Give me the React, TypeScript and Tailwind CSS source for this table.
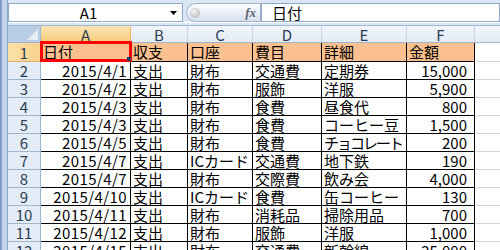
import React from "react";

const cols = [
  { key: "A", w: "w-[90px]" },
  { key: "B", w: "w-[57px]" },
  { key: "C", w: "w-[65px]" },
  { key: "D", w: "w-[69px]" },
  { key: "E", w: "w-[85px]" },
  { key: "F", w: "w-[68px]" },
];

const rows: string[][] = [
  ["2015/4/1", "支出", "財布", "交通費", "定期券", "15,000"],
  ["2015/4/2", "支出", "財布", "服飾", "洋服", "5,900"],
  ["2015/4/3", "支出", "財布", "食費", "昼食代", "800"],
  ["2015/4/3", "支出", "財布", "食費", "コーヒー豆", "1,500"],
  ["2015/4/5", "支出", "財布", "食費", "チョコレート", "200"],
  ["2015/4/7", "支出", "ICカード", "交通費", "地下鉄", "190"],
  ["2015/4/7", "支出", "財布", "交際費", "飲み会", "4,000"],
  ["2015/4/10", "支出", "ICカード", "食費", "缶コーヒー", "130"],
  ["2015/4/11", "支出", "財布", "消耗品", "掃除用品", "700"],
  ["2015/4/12", "支出", "財布", "服飾", "洋服", "1,000"],
  ["2015/4/15", "支出", "財布", "交通費", "新幹線", "25,000"],
];

const head = ["日付", "収支", "口座", "費目", "詳細", "金額"];

const RowHeader = ({ n, active }: { n: number; active?: boolean }) => (
  <div
    className={
      "w-[33px] shrink-0 flex items-end justify-center border-r border-b leading-[17px] text-[#2b3d52] " +
      (active
        ? "bg-gradient-to-r from-[#fbe0a8] to-[#f8d28c] border-r-[#f29436] border-b-[#e0b070]"
        : "bg-[#e4ecf7] border-r-[#9eb6ce] border-b-[#9eb6ce]")
    }
  >
    {n}
  </div>
);

// alignment per column: dates and amounts sit right, text sits left
const cellPad = (i: number, t: string) => {
  if (i === 0) return "text-right pr-[3px] tracking-[0.4px]";
  if (i === 5) return "text-right pr-[7px]";
  if (i === 4 && t.length > 5) return "pl-[2px] tracking-[-2px]";
  return "pl-[2px]";
};

export default function App() {
  return (
    <div
      className="w-[500px] h-[250px] overflow-hidden bg-white flex text-[15px] text-black"
      style={{ fontFamily: '"Noto Sans CJK JP", "Noto Sans", sans-serif' }}
    >
      {/* window frame */}
      <div className="w-[8px] shrink-0 bg-[#c3d4ea] border-l-2 border-l-[#7f9dc6] border-r border-r-[#8aa6cc]" />

      <div className="flex-1 flex flex-col">
        {/* formula bar */}
        <div className="h-[25px] shrink-0 bg-[#dbe6f4] pt-[3px] flex flex-col">
          <div className="h-[19px] flex">
            <div className="w-[175px] h-[19px] bg-white border border-[#8ea9c9] flex items-center relative">
              <span className="flex-1 text-center pr-[14px] leading-[17px]">A1</span>
              <svg className="absolute right-[5px] top-[7px]" width="7" height="4" viewBox="0 0 7 4">
                <polygon points="0,0 7,0 3.5,4" fill="#000" />
              </svg>
            </div>
            <div className="w-[3px]" />
            <div className="w-[75px] h-[19px] rounded-l-full border border-[#9fb3cc] bg-gradient-to-b from-[#fbfcfe] via-[#e9eff7] to-[#d6e1ee] flex items-center justify-between pl-[3px] pr-[4px]">
              <div className="w-[10px] h-[10px] rounded-full bg-[radial-gradient(circle_at_40%_35%,#f4f4f4,#a9acb0)]" />
              <span
                className="italic font-bold text-[13px] text-[#5a6470]"
                style={{ fontFamily: '"Liberation Serif", serif' }}
              >
                fx
              </span>
            </div>
            <div className="flex-1 h-[19px] bg-white border border-[#8ea9c9] pl-[10px] leading-[17px]">
              日付
            </div>
          </div>
          <div className="flex-1 border-t border-t-white" />
        </div>

        {/* column headers */}
        <div className="h-[18px] shrink-0 flex border-t border-t-[#9eb6ce]">
          <div className="w-[33px] shrink-0 bg-[#b9cde6] border-r border-b border-[#9eb6ce] relative">
            <svg className="absolute right-[2px] bottom-[2px]" width="11" height="11" viewBox="0 0 11 11">
              <polygon points="11,0 11,11 0,11" fill="#e6ecf3" />
            </svg>
          </div>
          {cols.map((c) => (
            <div
              key={c.key}
              className={
                c.w +
                " shrink-0 flex items-center justify-center border-r border-b leading-[17px] text-[#2b3d52] " +
                (c.key === "A"
                  ? "bg-gradient-to-b from-[#fbe3b4] to-[#f7cb7a] border-r-[#f0b560] border-b-[#f29436]"
                  : "bg-gradient-to-b from-[#f1f5fb] to-[#e2eaf4] border-r-[#c5d3e3] border-b-[#9eb6ce]")
              }
            >
              {c.key}
            </div>
          ))}
          <div className="flex-1 bg-gradient-to-b from-[#f1f5fb] to-[#e2eaf4] border-b border-b-[#9eb6ce]" />
        </div>

        {/* row 1 */}
        <div className="h-[19px] shrink-0 flex relative">
          <RowHeader n={1} active />
          {head.map((t, i) => (
            <div
              key={i}
              className={cols[i].w + " shrink-0 bg-[#fac08f] border-r border-b border-black pl-[2px] leading-[18px]"}
            >
              {t}
            </div>
          ))}
          <div className="flex-1 border-b border-b-[#d0d7e5]" />
          <div className="absolute left-[32px] top-[-2px] w-[92px] h-[21px] border-[3px] border-[#ff0000]" />
          <div className="absolute left-[119px] top-[14px] w-[4px] h-[4px] bg-[#1f3b66]" />
        </div>

        {/* data rows */}
        {rows.map((r, ri) => (
          <div key={ri} className="h-[18px] shrink-0 flex">
            <RowHeader n={ri + 2} />
            {r.map((t, i) => (
              <div
                key={i}
                className={
                  cols[i].w +
                  " shrink-0 border-r border-b border-black leading-[17px] whitespace-nowrap " +
                  cellPad(i, t)
                }
              >
                {t}
              </div>
            ))}
            <div className="flex-1 border-b border-b-[#d0d7e5]" />
          </div>
        ))}
      </div>
    </div>
  );
}
